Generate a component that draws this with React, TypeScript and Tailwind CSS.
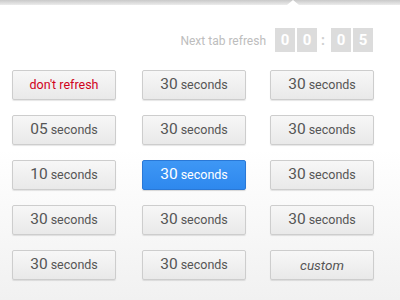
import React from "react";

type Opt = { num?: string; label: string; kind?: "red" | "active" | "custom" };

const options: Opt[] = [
  { label: "don't refresh", kind: "red" },
  { num: "30", label: "seconds" },
  { num: "30", label: "seconds" },
  { num: "05", label: "seconds" },
  { num: "30", label: "seconds" },
  { num: "30", label: "seconds" },
  { num: "10", label: "seconds" },
  { num: "30", label: "seconds", kind: "active" },
  { num: "30", label: "seconds" },
  { num: "30", label: "seconds" },
  { num: "30", label: "seconds" },
  { num: "30", label: "seconds" },
  { num: "30", label: "seconds" },
  { num: "30", label: "seconds" },
  { label: "custom", kind: "custom" },
];

function OptionButton({ opt }: { opt: Opt }) {
  const active = opt.kind === "active";
  return (
    <button
      className={
        active
          ? "w-[104px] h-[30px] rounded-[2px] border border-[#2a78d6] bg-gradient-to-b from-[#3e97f5] to-[#2e88ee] text-white shadow-[0_1px_1px_rgba(0,0,0,0.15)] flex items-center justify-center"
          : "w-[104px] h-[30px] rounded-[2px] border border-[#cdcdcd] bg-gradient-to-b from-[#f7f7f7] to-[#e9e9e9] text-[#555] shadow-[0_1px_1px_rgba(0,0,0,0.1)] flex items-center justify-center"
      }
    >
      {opt.kind === "red" && <span className="text-[12.5px] text-[#d0021b]">{opt.label}</span>}
      {opt.kind === "custom" && <span className="text-[13.5px] italic text-[#555]">{opt.label}</span>}
      {opt.num && (
        <span className="flex items-baseline">
          <span className="text-[15.5px]">{opt.num}</span>
          <span className="text-[12.5px] ml-[3px]">{opt.label}</span>
        </span>
      )}
    </button>
  );
}

export default function App() {
  const digits = ["0", "0", ":", "0", "5"];
  return (
    <div
      className="w-[400px] h-[300px] overflow-hidden bg-gradient-to-b from-white via-white to-[#f1f1f1] relative"
      style={{ fontFamily: "Roboto, 'Liberation Sans', sans-serif" }}
    >
      {/* popover top edge with arrow */}
      <div className="h-[5px] bg-gradient-to-b from-[#c9c9c9] to-[#ececec] relative">
        <div className="absolute left-[287px] top-[0px] w-0 h-0 border-l-[6px] border-r-[6px] border-b-[5px] border-l-transparent border-r-transparent border-b-white" />
      </div>

      <div className="flex justify-end items-center pr-[27px] mt-[23px] h-[24px]">
        <span className="text-[12px] text-[#bdbdbd] mr-[9px] mt-[2px]">Next tab refresh</span>
        <div className="flex items-center">
          {digits.map((d, i) =>
            d === ":" ? (
              <span key={i} className="w-[12px] text-center text-[14px] font-bold text-[#cfcfcf]">
                :
              </span>
            ) : (
              <span
                key={i}
                className="w-[20px] h-[24px] bg-[#dcdcdc] text-white text-[15px] font-bold flex items-center justify-center ml-[2px] first:ml-0"
              >
                {d}
              </span>
            )
          )}
        </div>
      </div>

      <div className="grid grid-cols-[130px_128px_104px] gap-y-[15px] pl-[12px] mt-[18px]">
        {options.map((o, i) => (
          <OptionButton key={i} opt={o} />
        ))}
      </div>
    </div>
  );
}
